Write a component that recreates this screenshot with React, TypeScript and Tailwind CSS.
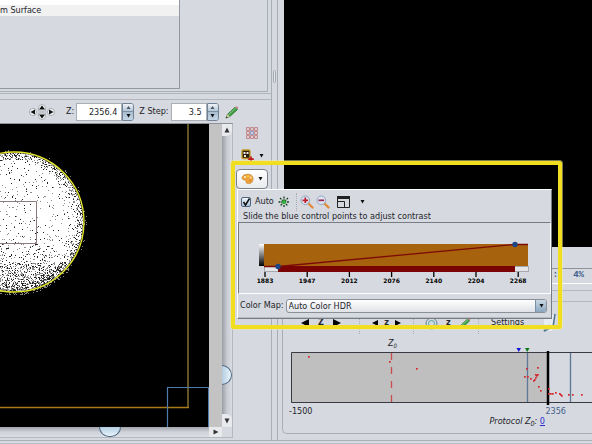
import React from "react";

const FONT = "font-['DejaVu_Sans_Condensed','DejaVu_Sans',sans-serif]";

function seeded(seed: number) {
  let s = seed;
  return () => {
    s = (s * 16807) % 2147483647;
    return s / 2147483647;
  };
}

const CX = 14;
const CY = 98;
const R = 69;

function buildSpecks() {
  const rnd = seeded(4127);
  let dark = "";
  let mid = "";
  let light = "";
  for (let i = 0; i < 15000; i++) {
    const x = Math.floor(rnd() * 90);
    const y = Math.floor(20 + rnd() * 158);
    const d = Math.hypot(x - CX, y - CY);
    const roll = rnd();
    const kind = rnd();
    if (d < R + 1) {
      const low = y > 138 ? 0.36 + (y - 138) * 0.005 : y > 114 ? 0.06 + (y - 114) * 0.004 : 0.04;
      const rim = d > R - 3 ? 0.45 : d > R - 6 ? 0.3 : d > R - 9 ? 0.06 : 0;
      if (roll < low + rim) {
        const cell = `M${x} ${y}h1v1h-1z`;
        if (kind < 0.35) dark += cell;
        else mid += cell;
      }
    } else if (d < R + 4 && roll < (y > 140 ? 0.3 : 0.04)) {
      light += `M${x} ${y}h1v1h-1z`;
    }
  }
  return { dark, mid, light };
}

const specks = buildSpecks();

function Specimen() {
  return (
    <svg className="block h-full w-full bg-black" role="img" aria-label="Scan view">
      <circle cx={CX} cy={CY} r={R} fill="#fff" />
      <path d={specks.mid} fill="#8d8d8d" />
      <path d={specks.dark} fill="#222" />
      <path d={specks.light} fill="#85857a" />
      <path d="M0 77.500H36.500V119.500H0" fill="none" stroke="#8d7a7a" />
      <circle cx={CX} cy={CY} r={R + 1} fill="none" stroke="#e8ea2c" strokeWidth="1.300" />
      <path d="M188 0V283.500" fill="none" stroke="#857132" strokeWidth="1.500" />
      <path d="M0 283.500H189" fill="none" stroke="#a87a18" strokeWidth="1.500" />
      <path d="M167.500 304V263.500H209" fill="none" stroke="#4f7cad" strokeWidth="1.200" />
      <path d="M208.500 263V304" fill="none" stroke="#4f7cad" />
    </svg>
  );
}

function Spinner({ id, label, value, box }: { id: string; label: string; value: string; box: string }) {
  return (
    <div className="flex items-center gap-[2px]">
      <label htmlFor={id} className="whitespace-nowrap">{label}</label>
      <div className="flex h-[18px]">
        <input
          id={id}
          defaultValue={value}
          className={`${box} h-full border border-[#a9adb4] bg-white pr-[4px] text-right text-[9px] outline-none`}
        />
        <div className="flex w-[12px] flex-col overflow-hidden rounded-r-[3px] border border-[#6f8296]">
          <button aria-label={`Increase ${label}`} className="flex flex-1 items-center justify-center border-b border-[#7d90a3] bg-linear-to-b from-[#eef3f8] to-[#b5c7d8]">
            <svg width="5" height="3"><path d="M2.500 0L4.500 3H.5z" fill="#4c5560" /></svg>
          </button>
          <button aria-label={`Decrease ${label}`} className="flex flex-1 items-center justify-center bg-linear-to-b from-[#a8bdd0] to-[#c5d6e6]">
            <svg width="5" height="4"><path d="M.5 0H4.500L2.500 3.500z" fill="#111" /></svg>
          </button>
        </div>
      </div>
    </div>
  );
}

function Pencil({ size = 14 }: { size?: number }) {
  return (
    <svg width={size} height={size} viewBox="0 0 14 14">
      <path d="M1 13L2.500 9.300L10 2.200L12.500 4.500L4.800 11.600z" fill="#3a9b3f" stroke="#246a2a" strokeWidth=".7" />
      <path d="M3.500 9.800L10.600 3.200" stroke="#8fd08f" strokeWidth="1" />
      <path d="M10 2.200L11.300 1.200Q12.800 1.300 13.300 2.900L12.500 4.500z" fill="#b98c86" />
      <path d="M1 13L2.500 9.300L4.800 11.600z" fill="#d9c9a0" />
      <path d="M.7 13.300L1.500 11.500L2.700 12.500z" fill="#222" />
    </svg>
  );
}

function PanPad() {
  return (
    <button aria-label="Move stage" className="shrink-0">
      <svg width="26" height="18" viewBox="0 0 26 18">
        <g fill="#eceef1" stroke="#a2a6ad" strokeWidth=".8">
          <circle cx="4" cy="9" r="3.600" />
          <circle cx="22" cy="9" r="3.600" />
          <path d="M9.500 8V5a3.500 3.500 0 0 1 7 0V8z" />
          <path d="M9.500 10v3a3.500 3.500 0 0 0 7 0v-3z" />
        </g>
        <path d="M1.500 9L6 6.500v5zM24.500 9L20 6.500v5zM13 2.500L16 6.500h-6zM13 15.500L16 11.500h-6z" fill="#111" />
      </svg>
    </button>
  );
}

function ScrollColumn() {
  return (
    <div className="flex w-[11px] shrink-0 flex-col border-r border-[#b3b7be] bg-linear-to-r from-[#9b9ea4] via-[#c9ccd2] to-[#d9dce2]">
      <button aria-label="Scroll up" className="flex h-[12px] items-center justify-center rounded-br-[6px] bg-[#e8eaed]">
        <svg width="6" height="6"><path d="M3 0.500L5.500 5.500H.5z" fill="#333" /></svg>
      </button>
      <div className="flex flex-1 flex-col justify-end overflow-hidden pb-[29px]">
        <div className="h-[20px] w-[10px] rounded-r-full border border-l-0 border-[#536b85] bg-linear-to-r from-[#b4cde2] to-[#eaf5fc]" />
      </div>
      <button aria-label="Scroll down" className="flex h-[13px] items-center justify-center rounded-tr-[6px] bg-[#e8eaed]">
        <svg width="6" height="6"><path d="M.5 .5H5.500L3 5.500z" fill="#333" /></svg>
      </button>
    </div>
  );
}

function ScrollRow() {
  return (
    <div className="flex h-[11px] border-b border-[#b3b7be]">
      <div className="flex flex-1 justify-center bg-linear-to-b from-[#a2a5ab] via-[#cfd2d8] to-[#dadde3] pl-[11px]">
        <div className="h-[10px] w-[22px] rounded-b-full border border-t-0 border-[#536b85] bg-linear-to-b from-[#b4cde2] to-[#eaf5fc]" />
      </div>
      <button aria-label="Scroll right" className="flex w-[13px] items-center justify-center bg-[#e8eaed]">
        <svg width="6" height="6"><path d="M.5 .5V5.500L5.500 3z" fill="#333" /></svg>
      </button>
      <div className="w-[11px] border-r border-[#b3b7be]" />
    </div>
  );
}

const Caret = () => (
  <svg width="5" height="4" className="shrink-0"><path d="M.5 0H4.500L2.500 3.500z" fill="#111" /></svg>
);

function GridIcon() {
  const cells = [0, 1, 2].flatMap((r) => [0, 1, 2].map((c) => [c, r]));
  return (
    <svg width="12" height="12" viewBox="0 0 12 12">
      {cells.map(([c, r]) => (
        <rect key={`${c}${r}`} x={c * 4 + 0.7} y={r * 4 + 0.7} width="2.600" height="2.600" fill="#e9e4ea"
          stroke={c === 1 && r === 1 ? "#6f7fb5" : "#b5686c"} strokeWidth=".8" />
      ))}
    </svg>
  );
}

function AddTileIcon() {
  return (
    <svg width="13" height="13" viewBox="0 0 13 13">
      <rect x="1" y="1" width="8" height="8.500" rx="1" fill="#2b1d12" stroke="#c29c20" strokeWidth="1.300" />
      <path d="M2.500 3H4.500V5H2.500zM5.500 3H7.500V5H5.500zM3 6H5V8H3z" fill="#f1e9dc" />
      <path d="M10 7.500V13M7.200 10.200H12.800" stroke="#c0151b" strokeWidth="1.700" />
    </svg>
  );
}

function PaletteIcon() {
  return (
    <svg width="13" height="12" viewBox="0 0 13 12">
      <path d="M1 4.500Q2 1 7 1.200Q12 1.500 12 5.500Q12 10.500 7.500 10.600Q4.500 10.500 5 8Q5 6.800 3 6.900Q.8 6.500 1 4.500z" fill="#efa53c" stroke="#c98a3a" strokeWidth=".8" />
      <circle cx="4" cy="4" r="1" fill="#fff3d6" />
      <circle cx="7" cy="3.200" r="1" fill="#f8d23c" />
      <circle cx="9.700" cy="4.600" r="1" fill="#fbe3a4" />
      <circle cx="9.200" cy="7.500" r="1" fill="#d9822a" />
    </svg>
  );
}

function LeftColumn() {
  return (
    <div className="flex w-[272px] shrink-0 flex-col border-r border-[#a9adb5]">
      <section className="h-[92px] w-[268px] border-r border-b border-[#a9adb5]">
        <ul className="h-[89px] w-[180px] border-r border-b border-[#93979f]">
          <li className="h-[5px] bg-white" />
          <li className="h-[11px] bg-[#f1f1f2] leading-[11px]">m Surface</li>
        </ul>
      </section>
      <div className="mt-px h-[7px] border-y border-[#b1b5bd]" />
      <section className="flex min-h-0 flex-1 flex-col">
        <div className="flex h-[23px] items-center pl-[29px]">
          <PanPad />
          <div className="w-[11px]" />
          <Spinner id="z" label="Z:" value="2356.4" box="w-[46px]" />
          <div className="w-[5px]" />
          <Spinner id="zstep" label="Z Step:" value="3.5" box="w-[36px]" />
          <button aria-label="Edit" className="ml-[6px]"><Pencil /></button>
        </div>
        <div className="flex min-h-0 flex-1">
          <div className="flex w-[233px] flex-col border-t border-[#8f9299]">
            <div className="flex min-h-0 flex-1">
              <div className="min-w-0 flex-1"><Specimen /></div>
              <div className="w-[13px] bg-[#c3c3c3]" />
              <ScrollColumn />
            </div>
            <ScrollRow />
          </div>
          <div className="flex flex-1 flex-col items-center gap-[10px] pt-[4px]">
            <button aria-label="Grid"><GridIcon /></button>
            <button aria-label="Add tile" className="flex items-center gap-[5px]"><AddTileIcon /><Caret /></button>
            <button aria-label="Contrast" className="-mt-[3px] flex h-[20px] w-[32px] items-center justify-center gap-[4px] rounded-[4px] border border-[#7d8188] bg-linear-to-b from-white to-[#e9ebef]">
              <PaletteIcon /><Caret />
            </button>
          </div>
        </div>
        <div className="h-[2px]" />
      </section>
    </div>
  );
}

const DOTS: [number, number][] = [
  [18, 4], [99, 9], [126, 16], [236, 16], [247, 15], [234, 24], [237, 24], [240, 26],
  [243, 28], [244, 27], [245, 25], [246, 23], [245, 22], [247, 22], [248, 34], [250, 38],
  [258, 36], [258, 41], [260, 41], [262, 41], [265, 40], [269, 41], [270, 42], [271, 43],
  [278, 42], [282, 42], [291, 42],
];

function ZPlot() {
  return (
    <svg className="block h-[58px] w-full" role="img" aria-label="Z positions">
      <rect x=".5" y="5.500" width="257" height="50" fill="#bfbfbf" />
      <path d="M900 5.500H.5V55.500H900" fill="none" stroke="#3a3b42" />
      <path d="M236.500 6V55M279.500 6V55" stroke="#5c7797" strokeWidth="1.300" />
      <path d="M100.500 6V55" stroke="#c94d4d" strokeWidth="1.300" strokeDasharray="7 7" />
      <path d="M257 4V58" stroke="#000" strokeWidth="2.500" />
      {DOTS.map(([x, y], i) => (
        <rect key={i} x={x - 1} y={y + 5} width="1.700" height="1.700" fill="#d5262c" />
      ))}
      <path d="M225.500 1H230L227.700 5z" fill="#1414d8" />
      <path d="M234 1H238.500L236.200 5z" fill="#0a7a14" />
    </svg>
  );
}

const Divider = () => <div className="h-[22px] border-l border-dotted border-[#a7abb3]" />;

function RightColumn() {
  return (
    <div className="flex min-w-0 flex-1 flex-col">
      <div className="ml-[6px] h-[247px] bg-black" />
      <div className="h-[21px]" />
      <div className="flex h-[16px] items-center justify-end border-t border-b border-t-[#8f939b] border-b-white pr-[8px] font-['Liberation_Mono',monospace] text-[9px] font-bold text-[#3d5f8c]">
        <span className="mr-[15px]">:</span>
        <span>4%</span>
      </div>
      <div className="mt-[6px] h-[12px] border-t border-b border-[#b4b8c0]" />
      <section className="ml-[4px] flex min-h-0 flex-1 flex-col rounded-bl-[5px] border-b border-l border-[#a9adb5]">
        <div className="mt-[10px] flex h-[22px] items-center overflow-hidden whitespace-nowrap">
          <div className="flex w-[76px] items-center justify-center gap-[9px]">
            <button aria-label="Previous"><svg width="8" height="8"><path d="M0 4L8 0V8z" /></svg></button>
            <span className="text-[9px] font-bold">Z</span>
            <button aria-label="Next"><svg width="8" height="8"><path d="M8 4L0 0V8z" /></svg></button>
          </div>
          <Divider />
          <div className="flex w-[53px] items-center justify-center gap-[6px]">
            <button aria-label="Step back"><svg width="6" height="6"><path d="M0 3L6 0V6z" /></svg></button>
            <span className="text-[9px] font-bold">z</span>
            <button aria-label="Step forward"><svg width="6" height="6"><path d="M6 3L0 0V6z" /></svg></button>
          </div>
          <Divider />
          <div className="flex w-[64px] items-center gap-[8px] pl-[11px]">
            <svg width="13" height="13" fill="none"><circle cx="6.500" cy="6.500" r="5.500" stroke="#5a7f99" /><circle cx="6.500" cy="6.500" r="3" stroke="#4aa7a0" /></svg>
            <span className="font-bold">z</span>
            <Pencil size={12} />
          </div>
          <Divider />
          <button className="ml-[12px] text-[9px]">Settings</button>
          <svg className="ml-[16px] shrink-0" width="20" height="20" viewBox="0 0 20 20">
            <path d="M3 2H15L12 18H5z" fill="#e7edf2" />
            <path d="M15 1L13 14L4 18L9 12" fill="none" stroke="#47708f" strokeWidth="1.500" />
          </svg>
        </div>
        <div className="h-[13px] pt-[4px] pl-[105px] text-[9px] leading-[10px] italic">Z<sub className="text-[6px]">0</sub></div>
        <div className="pl-[8px]"><ZPlot /></div>
        <div className="flex h-[11px] justify-between pr-[26px] pl-[6px] leading-[12px]">
          <span>-1500</span>
          <span className="text-[#45618c]">2356</span>
        </div>
        <div className="flex h-[10px] justify-end pr-[47px] leading-[10px]">
          <span className="italic">Protocol Z<sub className="text-[7px]">0</sub>:&nbsp;</span>
          <a href="#origin" className="text-[#2b2bd0] underline">0</a>
        </div>
      </section>
      <div className="h-[6px] shrink-0" />
    </div>
  );
}

const TICKS = [1883, 1947, 2012, 2076, 2140, 2204, 2268];

function ContrastChart() {
  return (
    <svg className="block h-[70px] w-full" role="img" aria-label="Contrast range">
      <defs>
        <linearGradient id="ramp" x1="0" y1="0" x2="0" y2="1">
          <stop offset="0" stopColor="#fff" />
          <stop offset="1" stopColor="#000" />
        </linearGradient>
      </defs>
      <rect x="20" y="21" width="5" height="22" fill="url(#ramp)" />
      <rect x="25" y="21" width="264" height="22" fill="#a6620c" />
      <rect x="25.500" y="43.500" width="264" height="5" fill="#e4e6e9" stroke="#a5a7ab" />
      <rect x="39" y="43" width="237" height="6" fill="#7a0303" />
      <path d="M25 43.500H39L276 21.500H289" fill="none" stroke="#7d0a08" strokeWidth="1.300" />
      <circle cx="39" cy="43.500" r="2.700" fill="#1c4684" />
      <circle cx="276" cy="21.500" r="2.700" fill="#1c4684" />
      {TICKS.map((t, i) => (
        <g key={t}>
          <path d={`M${26 + i * 42.2} 49v5`} stroke="#000" strokeWidth="1.300" />
          <text x={26 + i * 42.2} y="60" textAnchor="middle" className="font-['DejaVu_Sans',sans-serif] text-[6px] font-bold">{t}</text>
        </g>
      ))}
    </svg>
  );
}

function Magnifier({ plus }: { plus?: boolean }) {
  return (
    <svg width="14" height="14" viewBox="0 0 14 14">
      <path d="M8 8L12.500 12.500" stroke="#e08b3c" strokeWidth="2.400" strokeLinecap="round" />
      <circle cx="5.300" cy="5.300" r="4.300" fill="#dbe6f5" stroke="#92a4bd" />
      <path d={plus ? "M5.300 2.500V8.100M2.500 5.300H8.100" : "M2.500 5.300H8.100"} stroke={plus ? "#c01c2a" : "#a3244a"} strokeWidth="1.700" />
    </svg>
  );
}

function ContrastPopup() {
  return (
    <div role="dialog" aria-label="Contrast" className="absolute top-[189px] left-[237px] w-[315px] border border-t-white border-r-[#777b82] border-b-[#777b82] border-l-white bg-[#d6d9df]">
      <div className="flex h-[21px] items-center pt-[2px] pl-[3px]">
        <label className="flex items-center gap-[4px] text-[9px]">
          <span className="relative flex">
            <input type="checkbox" defaultChecked className="h-[10px] w-[10px] appearance-none rounded-[2px] border border-[#50677f] bg-linear-to-b from-[#f0f6fb] to-[#a9c2d8]" />
            <svg className="pointer-events-none absolute inset-0" width="10" height="10"><path d="M2.500 5L4.500 8L8.500 1.500" fill="none" stroke="#111" strokeWidth="1.500" /></svg>
          </span>
          Auto
        </label>
        <button aria-label="Auto adjust" className="ml-[4px]">
          <svg width="12" height="12" viewBox="0 0 12 12">
            <path d="M6 .5V11.500M.5 6H11.500M2 2L10 10M10 2L2 10" stroke="#143c18" strokeWidth="1.300" strokeDasharray="2 .8" />
            <circle cx="6" cy="6" r="2" fill="#35b53f" />
          </svg>
        </button>
        <div className="mr-[3px] ml-[6px] h-[18px] border-l border-dotted border-[#a7abb3]" />
        <button aria-label="Zoom in"><Magnifier plus /></button>
        <button aria-label="Zoom out" className="ml-[2px]"><Magnifier /></button>
        <button aria-label="Layout" className="ml-[7px] flex items-center gap-[10px]">
          <svg width="13" height="12" fill="none" stroke="#222">
            <path d="M.5 1.500H12.500V11.500H.5zM7.500 11.500V5.500H.5" />
            <path d="M0 1.500H13" strokeWidth="3" />
          </svg>
          <Caret />
        </button>
      </div>
      <p className="h-[11px] pl-[5px] text-[9px] leading-[11px] whitespace-nowrap">Slide the blue control points to adjust contrast</p>
      <div className="border border-t-[#777b82] border-r-white border-b-white border-l-[#777b82]"><ContrastChart /></div>
      <div className="flex h-[23px] items-center gap-[2px] pr-[4px] pl-[2px] text-[9px]">
        <label htmlFor="cmap" className="whitespace-nowrap">Color Map:</label>
        <div className="flex h-[14px] flex-1 overflow-hidden rounded-[3px] border border-[#8a8f98] bg-linear-to-b from-white to-[#dfe2e7]">
          <select id="cmap" className="min-w-0 flex-1 appearance-none bg-transparent pl-[2px] text-[9px] leading-[12px] outline-none">
            <option>Auto Color HDR</option>
          </select>
          <span className="pointer-events-none flex w-[11px] items-center justify-center border-l border-[#7d90a3] bg-linear-to-b from-[#c9d8e5] to-[#8ba6be]"><Caret /></span>
        </div>
      </div>
      <div className="h-px bg-[#b9bcc3]" />
    </div>
  );
}

export default function App() {
  return (
    <main className={`${FONT} relative flex h-screen flex-col overflow-hidden bg-[#d6d9df] text-[9px] text-[#23252b]`}>
      <div className="flex min-h-0 flex-1">
        <LeftColumn />
        <div className="w-[6px] shrink-0 border-r border-[#a9adb5] pt-[70px] pl-px">
          <div className="h-[13px] w-[3px] rounded-[2px] border border-[#a3a7ae] bg-[#e3e5e9]" />
        </div>
        <RightColumn />
      </div>
      <div className="h-[4px] border-t border-b border-t-[#a9adb5] border-b-[#b9bdc4]" />
      <ContrastPopup />
      <div className="pointer-events-none absolute top-[161px] left-[231px] h-[168px] w-[331px] rounded-[2px] border-4 border-[#f1de20] outline outline-[#f5efa0]/50" />
    </main>
  );
}
